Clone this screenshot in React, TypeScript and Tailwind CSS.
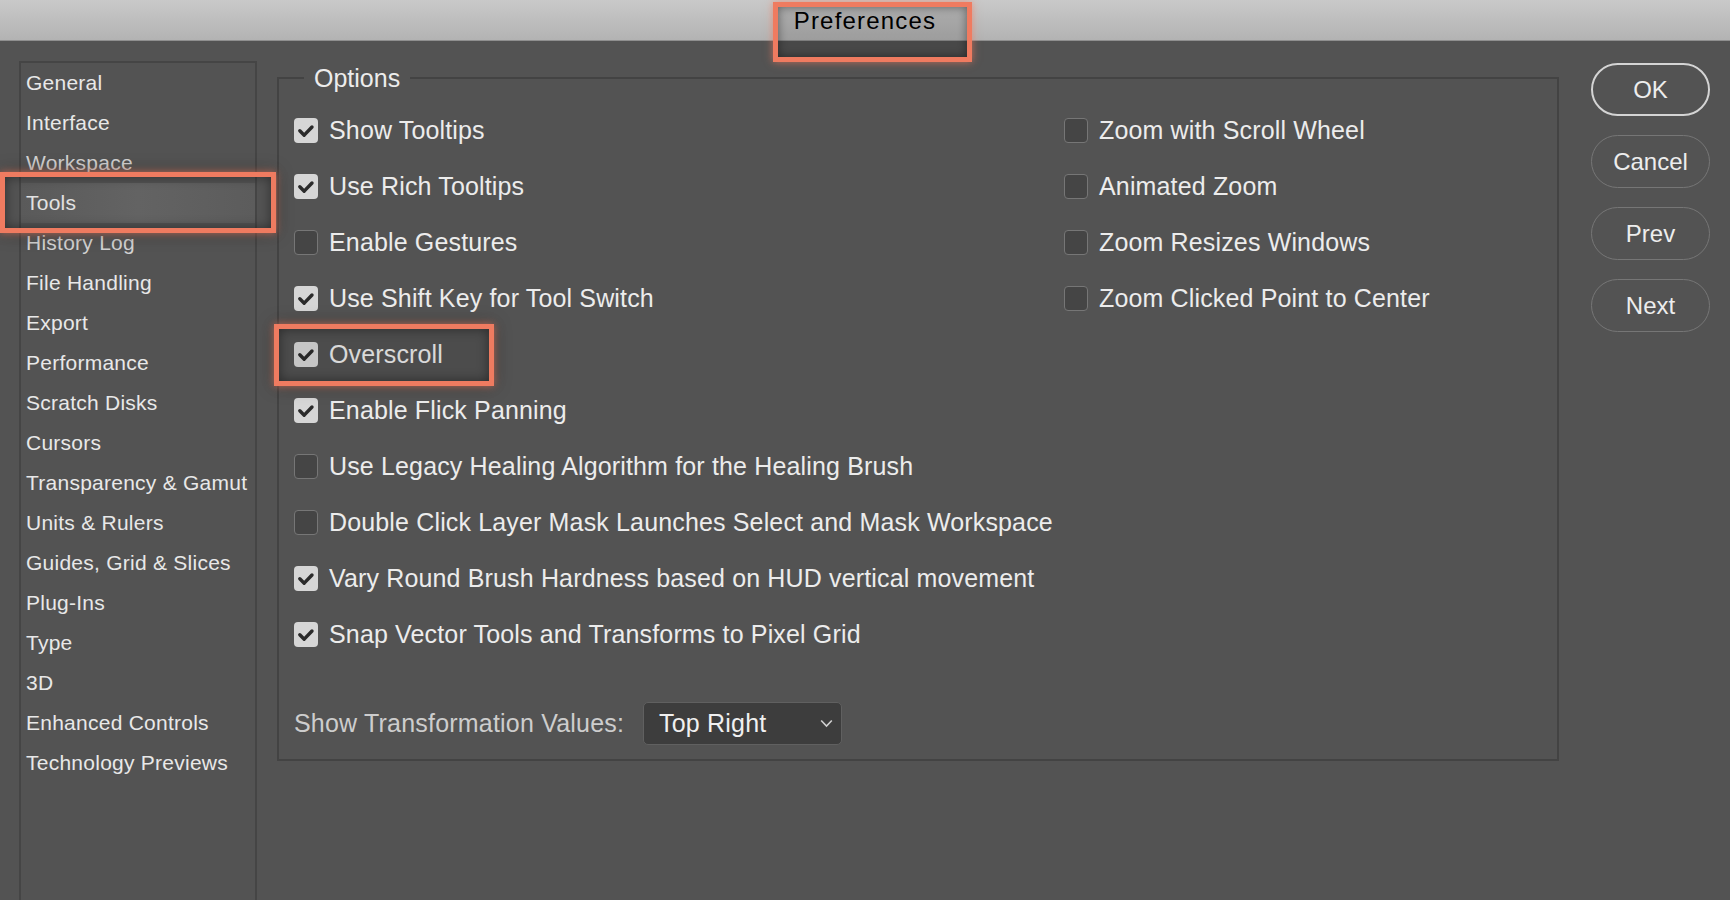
import React from "react";

const sidebarItems = [
  "General",
  "Interface",
  "Workspace",
  "Tools",
  "History Log",
  "File Handling",
  "Export",
  "Performance",
  "Scratch Disks",
  "Cursors",
  "Transparency & Gamut",
  "Units & Rulers",
  "Guides, Grid & Slices",
  "Plug-Ins",
  "Type",
  "3D",
  "Enhanced Controls",
  "Technology Previews",
];

const leftOptions: [string, boolean][] = [
  ["Show Tooltips", true],
  ["Use Rich Tooltips", true],
  ["Enable Gestures", false],
  ["Use Shift Key for Tool Switch", true],
  ["Overscroll", true],
  ["Enable Flick Panning", true],
  ["Use Legacy Healing Algorithm for the Healing Brush", false],
  ["Double Click Layer Mask Launches Select and Mask Workspace", false],
  ["Vary Round Brush Hardness based on HUD vertical movement", true],
  ["Snap Vector Tools and Transforms to Pixel Grid", true],
];

const rightOptions: [string, boolean][] = [
  ["Zoom with Scroll Wheel", false],
  ["Animated Zoom", false],
  ["Zoom Resizes Windows", false],
  ["Zoom Clicked Point to Center", false],
];

function CheckBox({ checked }: { checked: boolean }) {
  if (checked) {
    return (
      <div className="w-[24px] h-[25px] shrink-0 rounded-[4px] bg-[#d6d6d6] flex items-center justify-center">
        <svg width="24" height="25" viewBox="0 0 24 25">
          <path
            d="M5.8 12.8 L10.2 17.2 L18 9"
            fill="none"
            stroke="#2b2b2b"
            strokeWidth="3.4"
            strokeLinecap="round"
            strokeLinejoin="round"
          />
        </svg>
      </div>
    );
  }
  return (
    <div className="w-[24px] h-[25px] shrink-0 rounded-[4px] bg-[#454545] border-[1.5px] border-[#767676]" />
  );
}

function OptionRow({ label, checked }: { label: string; checked: boolean }) {
  return (
    <div className="h-[56px] flex items-center gap-[11px]">
      <CheckBox checked={checked} />
      <span className="text-[25px] tracking-[0.15px] text-[#ececec] whitespace-nowrap leading-none">{label}</span>
    </div>
  );
}

function Button({ label, primary }: { label: string; primary?: boolean }) {
  return (
    <div
      className={
        primary
          ? "w-[119px] h-[53px] rounded-full border-2 border-[#d4d4d4] flex items-center justify-center text-[24px] text-[#ededed]"
          : "w-[119px] h-[53px] rounded-full border-[1.5px] border-[#767676] flex items-center justify-center text-[24px] text-[#ededed]"
      }
    >
      {label}
    </div>
  );
}

export default function App() {
  return (
    <div className="w-[1730px] h-[900px] bg-[#535353] relative overflow-hidden font-['Liberation_Sans',Arial,sans-serif]">
      {/* Title bar */}
      <div className="h-[41px] bg-gradient-to-b from-[#c9c9c9] to-[#b3b3b3] border-b border-[#8f8f8f] flex items-center justify-center">
        <span className="text-[24px] tracking-[1.2px] text-black leading-none mt-[2px]">Preferences</span>
      </div>

      {/* Body */}
      <div className="flex items-start">
        {/* Sidebar */}
        <div className="ml-[19px] mt-[20px] w-[238px] h-[860px] border-2 border-[#454545]">
          {sidebarItems.map((item) => (
            <div
              key={item}
              className={
                item === "Tools"
                  ? "h-[40px] flex items-center pl-[5px] text-[21px] tracking-[0.25px] text-[#e2e2e2] bg-gradient-to-r from-[#5a5a5a] via-[#636363] to-[#5c5c5c] whitespace-nowrap"
                  : item === "History Log" || item === "Workspace"
                  ? "h-[40px] flex items-center pl-[5px] text-[21px] tracking-[0.25px] text-[#d2d2d2] whitespace-nowrap"
                  : "h-[40px] flex items-center pl-[5px] text-[21px] tracking-[0.25px] text-[#e8e8e8] whitespace-nowrap"
              }
            >
              {item}
            </div>
          ))}
        </div>

        {/* Options group */}
        <div className="ml-[20px] mt-[36px] w-[1282px] h-[684px] border-2 border-[#434343] relative">
          <div className="absolute left-[25px] top-[-15px] px-[10px] bg-[#535353] text-[25px] leading-[29px] text-[#ececec]">
            Options
          </div>
          <div className="pl-[15px] pt-[23px]">
            <div className="flex">
              <div className="w-[770px] flex flex-col">
                {leftOptions.map(([label, checked]) => (
                  <OptionRow key={label} label={label} checked={checked} />
                ))}
              </div>
              <div className="flex flex-col">
                {rightOptions.map(([label, checked]) => (
                  <OptionRow key={label} label={label} checked={checked} />
                ))}
              </div>
            </div>
            <div className="mt-[40px] h-[43px] flex items-center">
              <span className="w-[327px] text-[25px] tracking-[0.2px] text-[#cdcdcd] whitespace-nowrap leading-none">
                Show Transformation Values:
              </span>
              <div className="ml-[22px] w-[199px] h-[43px] rounded-[5px] border border-[#606060] bg-[#3d3d3d] flex items-center justify-between pl-[15px] pr-[8px]">
                <span className="text-[25px] tracking-[0.2px] text-[#f0f0f0] leading-none">Top Right</span>
                <svg width="13" height="9" viewBox="0 0 13 9">
                  <polyline points="1.2,1.5 6.5,7 11.8,1.5" fill="none" stroke="#d0d0d0" strokeWidth="1.6" />
                </svg>
              </div>
            </div>
          </div>
        </div>

        {/* Buttons */}
        <div className="ml-[32px] mt-[22px] flex flex-col gap-[19px]">
          <Button label="OK" primary />
          <Button label="Cancel" />
          <Button label="Prev" />
          <Button label="Next" />
        </div>
      </div>

      {/* Annotation highlight boxes */}
      <div className="absolute left-[773px] top-[2px] w-[199px] h-[60px] border-[5px] border-[#ef7b60] bg-black/[0.12] shadow-[inset_0_0_10px_rgba(0,0,0,0.45),0_0_8px_rgba(239,123,96,0.7)]" />
      <div className="absolute left-0 top-[172px] w-[276px] h-[61px] border-[5px] border-[#ef7b60] shadow-[inset_0_0_12px_rgba(0,0,0,0.45),0_0_8px_rgba(239,123,96,0.7),0_0_16px_rgba(0,0,0,0.35)]" />
      <div className="absolute left-[274px] top-[324px] w-[220px] h-[62px] border-[5px] border-[#ef7b60] bg-black/[0.08] shadow-[inset_0_0_12px_rgba(0,0,0,0.45),0_0_8px_rgba(239,123,96,0.7),0_0_16px_rgba(0,0,0,0.35)]" />
    </div>
  );
}
